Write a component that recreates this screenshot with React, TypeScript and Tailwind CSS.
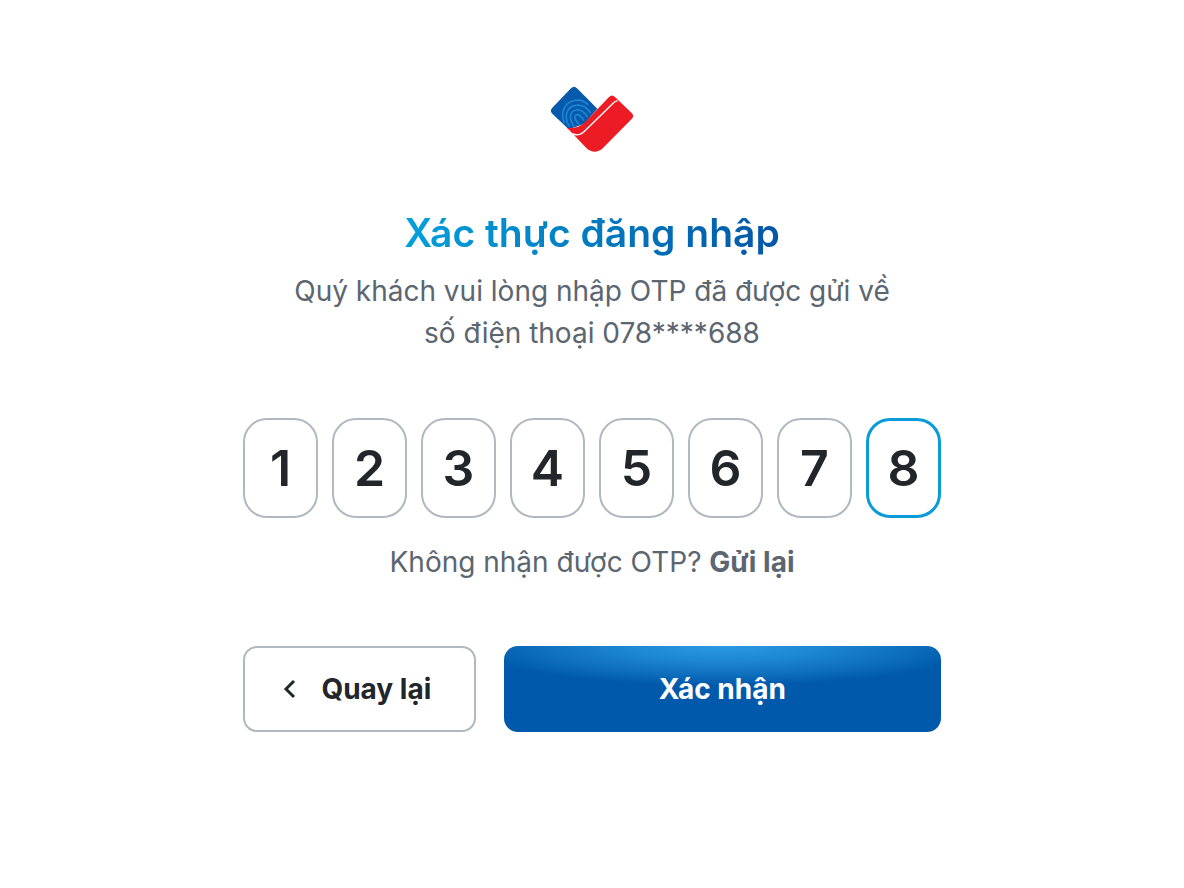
import { useState } from "react";
import type { FormEvent } from "react";

function Logo() {
  return (
    <svg viewBox="26 18 252 198" className="h-[66px] w-[84px]" role="img" aria-label="Logo">
      <path
        d="M89 25 Q98 16 107 25 L168 86 L128 132 L82 148 L33 101 Q24 92 33 83 Z"
        fill="#0659ab"
      />
      <g fill="none" stroke="#1a86d2" strokeWidth="5" strokeLinecap="round">
        <path d="M69 128 C55 94 73 65 101 61 C117 59 130 64 139 73" />
        <path d="M83 138 C67 110 76 79 103 76 C123 73 138 84 147 98" />
        <path d="M97 137 C81 114 86 93 105 90 C121 88 129 98 138 109" />
        <path d="M112 132 C97 117 99 104 108 104 C117 104 119 111 127 120" />
      </g>
      <path
        d="M77 143 C100 146 117 141 131 127 L203 51 Q212 42 221 51 L271 99 Q280 108 271 117 L185 204 Q160 227 135 204 Z"
        fill="#ed1c24"
      />
      <path
        d="M93 161 C107 168 119 164 131 152 L216 69 Q221 64 229 62"
        fill="none"
        stroke="#fff"
        strokeWidth="4"
      />
    </svg>
  );
}

const initialCode = ["1", "2", "3", "4", "5", "6", "7", "8"];

export default function App() {
  const [code, setCode] = useState(initialCode);
  const [active, setActive] = useState(7);

  const update = (index: number, value: string) =>
    setCode(code.map((digit, i) => (i === index ? value.slice(-1) : digit)));

  return (
    <main className="flex min-h-screen justify-center bg-white px-6 pt-[86px] pb-12 font-['Inter',sans-serif] text-[#22262a]">
      <form
        className="flex w-full max-w-[698px] flex-col items-center"
        onSubmit={(event: FormEvent) => event.preventDefault()}
      >
        <Logo />
        <h1 className="mt-14 bg-linear-to-r from-[#04a0dc] to-[#0556a6] bg-clip-text text-[39px] leading-[50px] font-semibold text-transparent">
          Xác thực đăng nhập
        </h1>
        <p className="mt-3 text-center text-[28px] leading-[42px] text-[#5b6670]">
          Quý khách vui lòng nhập OTP đã được gửi về
          <br />
          số điện thoại 078****688
        </p>

        <div className="mt-16 grid w-full grid-cols-8 gap-3.5">
          {code.map((digit, index) => (
            <input
              key={index}
              aria-label={`OTP ${index + 1}`}
              inputMode="numeric"
              value={digit}
              onFocus={() => setActive(index)}
              onChange={(event) => update(index, event.target.value)}
              className={
                index === active
                  ? "h-[100px] w-full min-w-0 rounded-3xl border-[3px] border-[#0a9bd8] text-center text-[50px] font-semibold outline-none"
                  : "h-[100px] w-full min-w-0 rounded-3xl border-2 border-[#b1b9c0] text-center text-[50px] font-semibold outline-none"
              }
            />
          ))}
        </div>

        <p className="mt-6 text-[28px] leading-10 text-[#5b6670]">
          Không nhận được OTP?{" "}
          <button type="button" className="font-bold">
            Gửi lại
          </button>
        </p>

        <div className="mt-16 flex w-full gap-7">
          <button
            type="button"
            className="flex h-[86px] w-1/3 items-center justify-center gap-6 rounded-[14px] border-2 border-[#b1b9c0] pr-1.5 text-[28px] font-bold"
          >
            <svg viewBox="0 0 16 20" className="h-5 w-4" fill="none" stroke="currentColor" strokeWidth="3" aria-hidden="true">
              <path d="M13 2 L5 10 L13 18" />
            </svg>
            Quay lại
          </button>
          <button
            type="submit"
            className="h-[86px] flex-1 rounded-[14px] bg-[#0059aa] bg-[radial-gradient(ellipse_58%_46%_at_50%_0%,#2a9ae6_0%,#1c86d3_40%,#0d6dbd_75%,#0059aa_100%)] text-[28px] font-bold text-white"
          >
            Xác nhận
          </button>
        </div>
      </form>
    </main>
  );
}
